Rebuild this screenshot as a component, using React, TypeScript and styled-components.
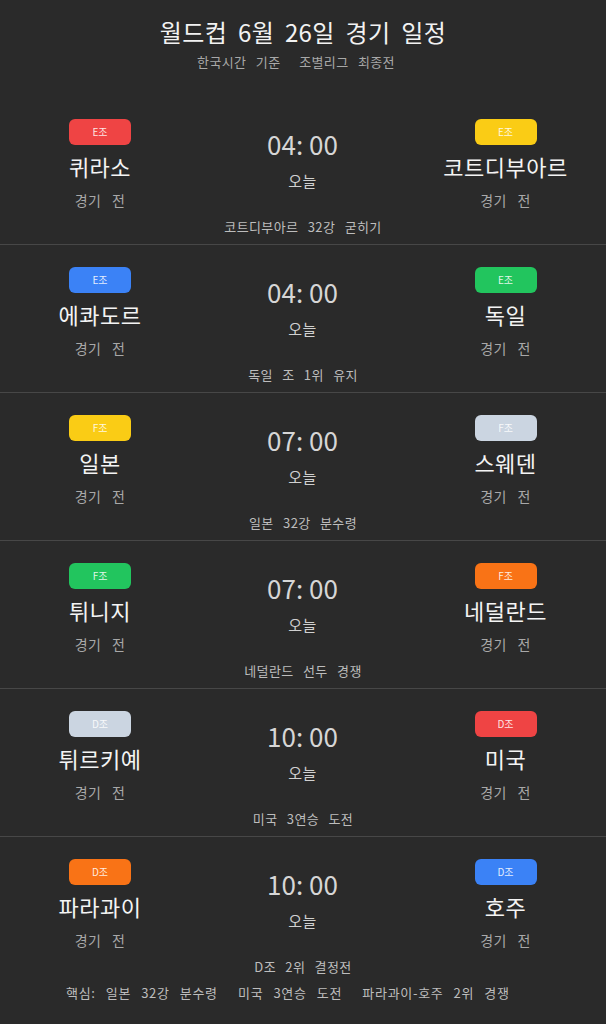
import * as React from 'react'
import styled, {createGlobalStyle} from 'styled-components'

const GlobalStyle = createGlobalStyle`
  html, body {
    margin: 0;
    padding: 0;
    background: #2a2a2a;
  }
  body {
    font-family: 'Noto Sans CJK KR', 'Noto Sans', sans-serif;
  }
`

const Page = styled.div`
  width: 606px;
  min-height: 1024px;
  background: #2a2a2a;
  color: #eee;
`

const Header = styled.header`
  display: flex;
  flex-direction: column;
  align-items: center;
  padding: 15px 0 26px;
`

const Title = styled.h1`
  margin: 0;
  font-size: 24px;
  line-height: 34px;
  font-weight: 400;
  letter-spacing: 0.4px;
  word-spacing: 5px;
  color: #f2f2f2;
`

const Subtitle = styled.p`
  margin: 4px 0 0;
  font-size: 13px;
  line-height: 18px;
  letter-spacing: 0.4px;
  word-spacing: 6px;
  color: #a8a8a8;
  white-space: pre;
  padding-right: 14px;
`

const List = styled.div`
  display: flex;
  flex-direction: column;
`

const Row = styled.section`
  display: grid;
  grid-template-columns: 200px 1fr 201px;
  padding: 22px 0 8px;
  &:not(:last-child) {
    border-bottom: 1px solid #474747;
  }
`

const Team = styled.div`
  display: flex;
  flex-direction: column;
  align-items: center;
`

const Badge = styled.span<{$color: string}>`
  display: flex;
  align-items: center;
  justify-content: center;
  width: 62px;
  height: 26px;
  border-radius: 6px;
  background: ${p => p.$color};
  color: rgba(255, 255, 255, 0.88);
  font-size: 10px;
  line-height: 1;
`

const TeamName = styled.div`
  margin-top: 6px;
  font-size: 22px;
  line-height: 30px;
  letter-spacing: 0.5px;
  color: #f4f4f4;
`

const Status = styled.div`
  margin-top: 9px;
  font-size: 14px;
  line-height: 20px;
  letter-spacing: 0.4px;
  word-spacing: 7px;
  color: #a8a8a8;
`

const Center = styled.div`
  display: flex;
  flex-direction: column;
  align-items: center;
  padding-top: 8px;
`

const Time = styled.div`
  font-size: 26px;
  line-height: 34px;
  color: #d6d6d6;
  white-space: pre;
`

const Day = styled.div`
  margin-top: 9px;
  font-size: 15px;
  line-height: 22px;
  letter-spacing: 0.5px;
  color: #d0d0d0;
`

const Note = styled.div`
  grid-column: 1 / -1;
  margin-top: 8px;
  text-align: center;
  font-size: 13px;
  line-height: 18px;
  letter-spacing: 0.4px;
  word-spacing: 6px;
  color: #bdbdbd;
`

const Footer = styled.footer`
  padding: 0 0 0 66px;
  font-size: 13px;
  line-height: 18px;
  letter-spacing: 0.7px;
  word-spacing: 6.5px;
  color: #bdbdbd;
  white-space: pre;
`

const colors = {
  red: '#ef4444',
  yellow: '#facc15',
  blue: '#3b82f6',
  green: '#22c55e',
  slate: '#cbd5e1',
  orange: '#f97316'
}

type TeamInfo = {name: string, group: string, color: string}
type Match = {home: TeamInfo, away: TeamInfo, time: string, note: string}

const matches: Match[] = [
  {home: {name: '퀴라소', group: 'E조', color: colors.red}, away: {name: '코트디부아르', group: 'E조', color: colors.yellow}, time: '04: 00', note: '코트디부아르 32강 굳히기'},
  {home: {name: '에콰도르', group: 'E조', color: colors.blue}, away: {name: '독일', group: 'E조', color: colors.green}, time: '04: 00', note: '독일 조 1위 유지'},
  {home: {name: '일본', group: 'F조', color: colors.yellow}, away: {name: '스웨덴', group: 'F조', color: colors.slate}, time: '07: 00', note: '일본 32강 분수령'},
  {home: {name: '튀니지', group: 'F조', color: colors.green}, away: {name: '네덜란드', group: 'F조', color: colors.orange}, time: '07: 00', note: '네덜란드 선두 경쟁'},
  {home: {name: '튀르키예', group: 'D조', color: colors.slate}, away: {name: '미국', group: 'D조', color: colors.red}, time: '10: 00', note: '미국 3연승 도전'},
  {home: {name: '파라과이', group: 'D조', color: colors.orange}, away: {name: '호주', group: 'D조', color: colors.blue}, time: '10: 00', note: 'D조 2위 결정전'}
]

const TeamBlock = ({team}: {team: TeamInfo}) => (
  <Team>
    <Badge $color={team.color}>{team.group}</Badge>
    <TeamName>{team.name}</TeamName>
    <Status>경기 전</Status>
  </Team>
)

export default function App() {
  return (
    <Page>
      <GlobalStyle/>
      <Header>
        <Title>월드컵 6월 26일 경기 일정</Title>
        <Subtitle>{'한국시간 기준  조별리그 최종전'}</Subtitle>
      </Header>
      <List>
        {matches.map((m, i) => (
          <Row key={i}>
            <TeamBlock team={m.home}/>
            <Center>
              <Time>{m.time}</Time>
              <Day>오늘</Day>
            </Center>
            <TeamBlock team={m.away}/>
            <Note>{m.note}</Note>
          </Row>
        ))}
      </List>
      <Footer>{'핵심: 일본 32강 분수령  미국 3연승 도전  파라과이-호주 2위 경쟁'}</Footer>
    </Page>
  )
}
